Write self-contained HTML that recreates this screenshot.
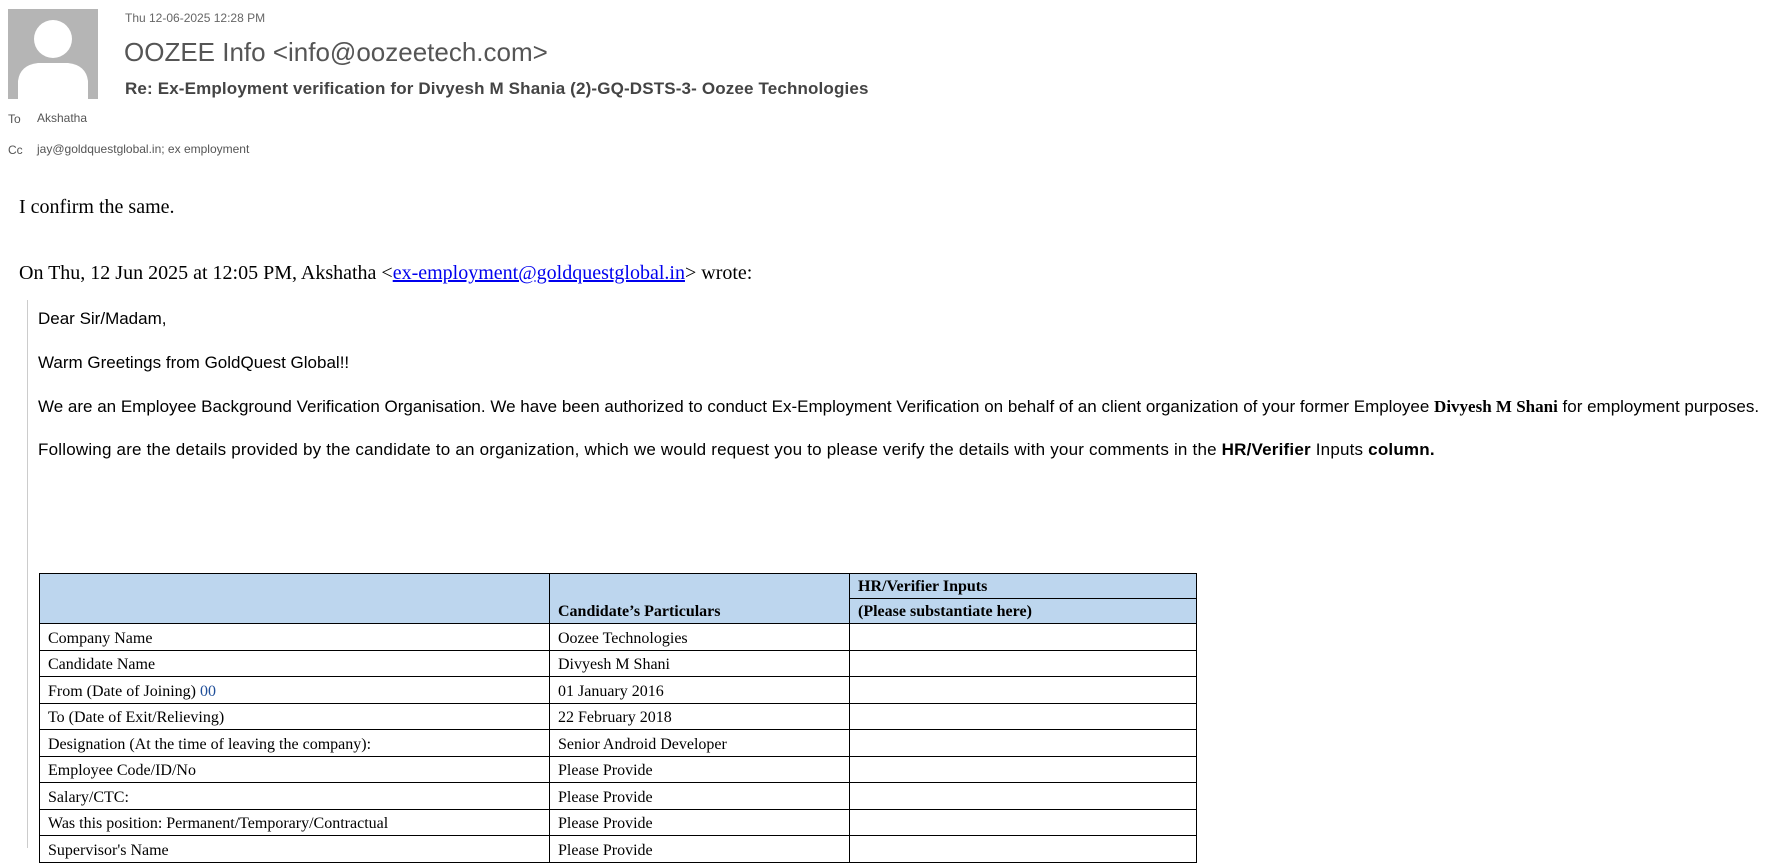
<!DOCTYPE html>
<html><head><meta charset="utf-8"><style>
body{margin:0;width:1778px;height:848px;overflow:hidden;background:#fff;position:relative;font-family:"Liberation Sans",sans-serif}
.a{position:absolute;white-space:nowrap}
.t{font-family:"Liberation Serif",serif}
table{border-collapse:collapse;font-family:"Liberation Serif",serif;font-size:16px;position:absolute;left:39px;top:573px;width:1158px;table-layout:fixed}
td{border:1px solid #000;padding:0 8px;height:23.5px;vertical-align:bottom;line-height:18px;padding-bottom:2px}
.h{background:#bdd6ee;font-weight:bold}
</style></head><body>
<div class="a" style="left:8px;top:9px;width:90px;height:90px;background:#b5b5b5;overflow:hidden">
<svg width="90" height="90"><circle cx="45" cy="30" r="19" fill="#fff"/><path d="M10 90 L10 72 Q12 56 30 54 L60 54 Q78 56 80 72 L80 90Z" fill="#fff"/></svg></div>
<div class="a" style="left:125px;top:11px;font-size:12px;color:#666">Thu 12-06-2025 12:28 PM</div>
<div class="a" style="left:124px;top:37px;font-size:26px;color:#555;font-weight:300">OOZEE Info &lt;info@oozeetech.com&gt;</div>
<div class="a" style="left:125px;top:79px;font-size:17px;color:#444;font-weight:bold;letter-spacing:0.15px">Re: Ex-Employment verification for Divyesh M Shania (2)-GQ-DSTS-3- Oozee Technologies</div>
<div class="a" style="left:8px;top:112px;font-size:12px;color:#555">To</div>
<div class="a" style="left:37px;top:111px;font-size:12px;color:#555">Akshatha</div>
<div class="a" style="left:8px;top:143px;font-size:12px;color:#555">Cc</div>
<div class="a" style="left:37px;top:142px;font-size:12px;color:#555">jay@goldquestglobal.in; ex employment</div>
<div class="a t" style="left:19px;top:196px;font-size:20px">I confirm the same.</div>
<div class="a t" style="left:19px;top:262px;font-size:20px">On Thu, 12 Jun 2025 at 12:05 PM, Akshatha &lt;<span style="color:#00e;text-decoration:underline">ex-employment@goldquestglobal.in</span>&gt; wrote:</div>
<div class="a" style="left:27px;top:300px;width:1px;height:548px;background:#ccc"></div>
<div class="a" style="left:38px;top:309px;font-size:17px">Dear Sir/Madam,</div>
<div class="a" style="left:38px;top:353px;font-size:17px">Warm Greetings from GoldQuest Global!!</div>
<div class="a" style="left:38px;top:397px;font-size:17px">We are an Employee Background Verification Organisation. We have been authorized to conduct Ex-Employment Verification on behalf of an client organization of your former Employee <b class="t">Divyesh M Shani</b> for employment purposes.</div>
<div class="a" style="left:38px;top:440px;font-size:17px;letter-spacing:0.2px">Following are the details provided by the candidate to an organization, which we would request you to please verify the details with your comments in the <b>HR/Verifier</b> Inputs <b>column.</b></div>
<table>
<colgroup><col style="width:510px"><col style="width:300px"><col></colgroup>
<tr><td class="h" rowspan="2"></td><td class="h" rowspan="2">Candidate’s Particulars</td><td class="h" style="height:22px">HR/Verifier Inputs</td></tr>
<tr><td class="h" style="height:22px">(Please substantiate here)</td></tr>
<tr><td>Company Name</td><td>Oozee Technologies</td><td></td></tr>
<tr><td>Candidate Name</td><td>Divyesh M Shani</td><td></td></tr>
<tr><td>From (Date of Joining) <span style="color:#1f4e99">00</span></td><td>01 January 2016</td><td></td></tr>
<tr><td>To (Date of Exit/Relieving)</td><td>22 February 2018</td><td></td></tr>
<tr><td>Designation (At the time of leaving the company):</td><td>Senior Android Developer</td><td></td></tr>
<tr><td>Employee Code/ID/No</td><td>Please Provide</td><td></td></tr>
<tr><td>Salary/CTC:</td><td>Please Provide</td><td></td></tr>
<tr><td>Was this position: Permanent/Temporary/Contractual</td><td>Please Provide</td><td></td></tr>
<tr><td>Supervisor's Name</td><td>Please Provide</td><td></td></tr>
</table>
</body></html>
